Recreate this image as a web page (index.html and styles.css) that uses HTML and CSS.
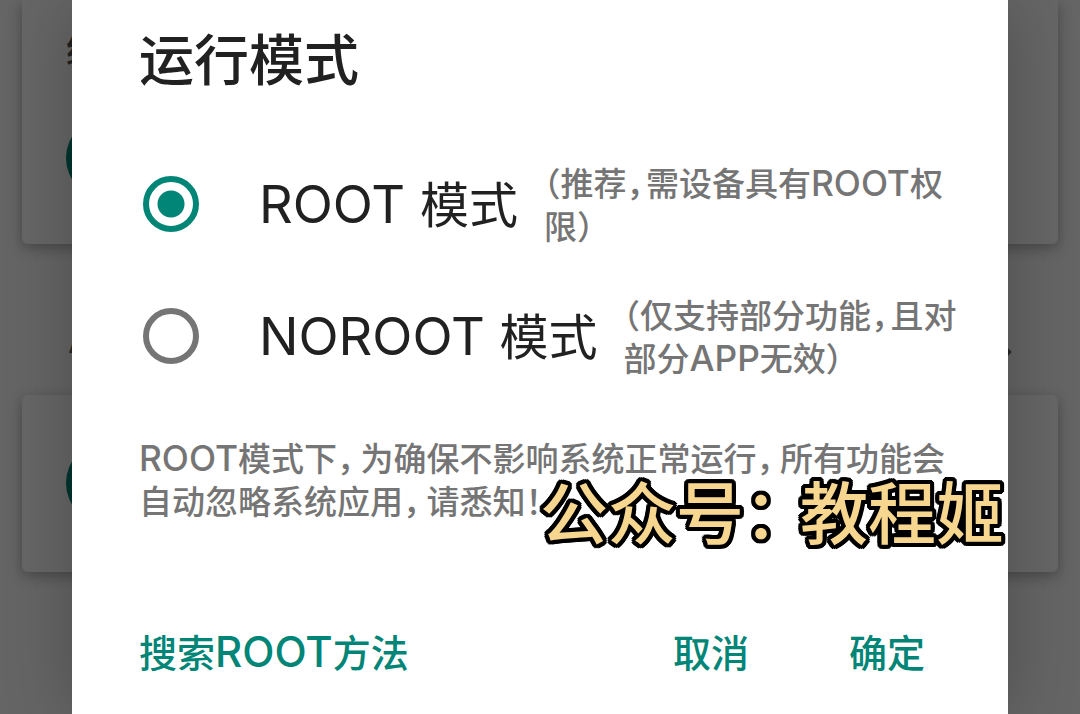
FILE: index.html
```html
<!DOCTYPE html>
<html lang="zh-CN">
<head>
<meta charset="utf-8">
<meta name="viewport" content="width=device-width, initial-scale=1">
<title>运行模式</title>
<link rel="stylesheet" href="styles.css">
</head>
<body>
<div class="screen">
  <div class="page" aria-hidden="true">
    <div class="card card-top">
      <div class="card-title">统</div>
      <div class="avatar"></div>
    </div>
    <div class="section">
      <span>A</span>
      <svg class="chevron" width="16" height="28" viewBox="0 0 16 28" fill="none" stroke="currentColor" stroke-width="4"><path d="M2 3l11 11L2 25"/></svg>
    </div>
    <div class="card card-bottom">
      <div class="avatar"></div>
    </div>
  </div>
  <div class="scrim"></div>
  <form class="dialog" role="dialog" aria-labelledby="dialog-title">
    <h1 class="title" id="dialog-title">运行模式</h1>
    <div class="options">
      <div class="option">
        <input class="radio" type="radio" name="mode" id="mode-root" checked>
        <label class="label" for="mode-root"><span class="latin">ROOT </span>模式</label>
        <span class="note">（推荐<span class="comma">，</span>需设备具有<span class="latin">ROOT</span>权限）</span>
      </div>
      <div class="option">
        <input class="radio" type="radio" name="mode" id="mode-noroot">
        <label class="label" for="mode-noroot"><span class="latin">NOROOT </span>模式</label>
        <span class="note">（仅支持部分功能<span class="comma">，</span>且对部分<span class="latin">APP</span>无效）</span>
      </div>
    </div>
    <p class="message"><span class="latin">ROOT</span>模式下<span class="comma">，</span>为确保不影响系统正常运行<span class="comma">，</span>所有功能会自动忽略系统应用<span class="comma">，</span>请悉知！</p>
    <div class="actions">
      <button class="action action-search" type="button">搜索<span class="latin">ROOT</span>方法</button>
      <button class="action" type="button">取消</button>
      <button class="action" type="submit">确定</button>
    </div>
  </form>
  <div class="watermark">公众号<span class="colon">：</span>教程姬</div>
</div>
</body>
</html>
```

FILE: styles.css
```css
* {
  box-sizing: border-box;
}

body {
  margin: 0;
  background: #666;
  font-family: Inter, "Noto Sans CJK SC", sans-serif;
  color: #212121;
}

.screen {
  position: relative;
  display: grid;
  min-height: 100vh;
  overflow: hidden;
}

.page,
.scrim,
.dialog {
  grid-area: 1 / 1;
  min-width: 0;
}

.page {
  background: #fcfcfc;
  padding: 0 22px;
}

.card {
  background: #fff;
  border-radius: 6px;
  padding-left: 44px;
  box-shadow: 0 4px 14px rgba(0, 0, 0, 0.3);
}

.card-top {
  padding-top: 24px;
  padding-bottom: 44px;
  border-radius: 0 0 6px 6px;
}

.card-bottom {
  padding-top: 46px;
  padding-bottom: 47px;
}

.card-title {
  height: 92px;
  font-size: 36px;
  font-weight: 500;
  line-height: 52px;
  color: #555;
}

.avatar {
  width: 84px;
  height: 84px;
  border-radius: 50%;
  background: #018577;
}

.section {
  display: flex;
  justify-content: space-between;
  align-items: center;
  padding: 70px 46px 29px;
  font-size: 36px;
  line-height: 52px;
  color: #666;
}

.section .chevron {
  margin-top: 24px;
}

.scrim {
  background: rgba(0, 0, 0, 0.6);
}

.dialog {
  margin: 0 72px;
  padding: 20px 40px 20px 67px;
  background: #fff;
  box-shadow: 0 0 64px rgba(0, 0, 0, 0.24);
}

.latin {
  font-size: 107%;
  line-height: 1;
}

.title {
  margin: 0;
  font-size: 55px;
  font-weight: 500;
  line-height: 80px;
}

.options {
  padding-top: 38px;
}

.option {
  display: flex;
  align-items: center;
  padding: 21px 0;
}

.radio {
  flex: none;
  appearance: none;
  width: 56px;
  height: 56px;
  margin: 0 60px 0 4px;
  border: 6px solid #757575;
  border-radius: 50%;
}

.radio:checked {
  border-color: #018577;
  background: radial-gradient(circle, #018577 13px, #fff 14px);
}

.label {
  flex: none;
  padding-top: 4px;
  font-size: 49px;
  line-height: 72px;
}

.note {
  margin-left: 26px;
  padding-top: 4px;
  font-feature-settings: "halt";
}

.note,
.message {
  font-size: 33px;
  font-weight: 500;
  line-height: 43px;
  color: #757575;
}

.comma {
  margin-right: 7px;
  font-feature-settings: "halt";
}

.note .comma {
  margin-right: 3px;
}

.message {
  margin: 0;
  padding: 36px 20px 0 0;
}

.actions {
  display: flex;
  align-items: center;
  padding: 101px 43px 0 0;
}

.action {
  margin: 0;
  padding: 0;
  border: 0;
  background: none;
  font: inherit;
  font-size: 38px;
  font-weight: 500;
  line-height: 56px;
  color: #018577;
}

.action .latin {
  font-size: 42px;
}

.action + .action {
  margin-left: 100px;
}

.actions .action-search {
  margin-right: auto;
}

.watermark {
  position: absolute;
  right: 76px;
  top: 464px;
  font-size: 68px;
  font-weight: 500;
  line-height: 100px;
  color: #f7d68f;
  text-shadow:
    4px 0 #000, -4px 0 #000, 0 4px #000, 0 -4px #000,
    3px 3px #000, -3px 3px #000, 3px -3px #000, -3px -3px #000,
    4px 2px #000, -4px 2px #000, 4px -2px #000, -4px -2px #000,
    2px 4px #000, -2px 4px #000, 2px -4px #000, -2px -4px #000,
    2px 0 #000, -2px 0 #000, 0 2px #000, 0 -2px #000;
}

.colon {
  margin: 0 22px 0 0;
  font-feature-settings: "halt";
}
```
